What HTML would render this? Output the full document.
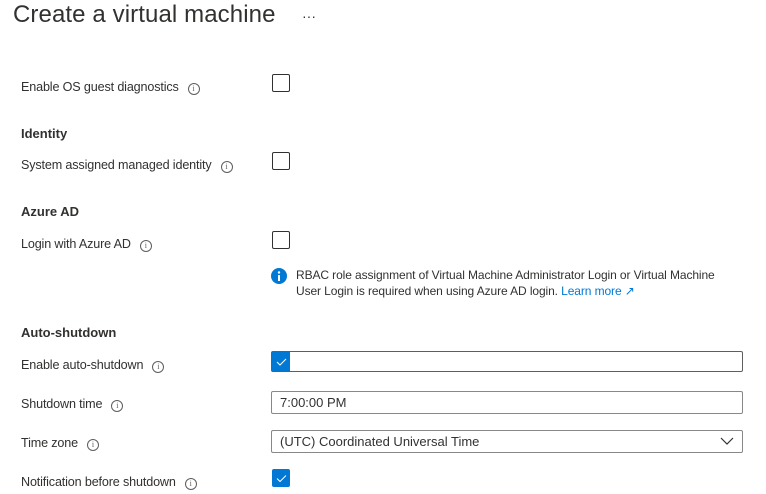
<!DOCTYPE html>
<html><head><style>
body{margin:0;width:766px;height:494px;background:#fff;font-family:"Segoe UI","Liberation Sans",sans-serif;color:#323130;position:relative;overflow:hidden}
.a{position:absolute}
.t{left:13px;top:1px;font-size:24px;color:#323130;white-space:nowrap;letter-spacing:0.1px}
.lbl{left:21px;font-size:12.6px;line-height:16px;white-space:nowrap;transform:translateY(-7px);letter-spacing:-0.15px}
.h{left:21px;font-size:13px;font-weight:bold;transform:translateY(-7px)}
.i{display:inline-block;width:10px;height:10px;border:1px solid #605e5c;border-radius:50%;font-size:8px;line-height:10px;text-align:center;margin-left:9px;vertical-align:0px;color:#605e5c;font-family:"Liberation Serif",serif;letter-spacing:0}
.cb{width:16px;height:16px;border:1px solid #323130;border-radius:2px;left:272px}
.box{left:271px;border:1px solid #8a8886;border-radius:2px;font-size:13px;line-height:21px;padding-left:8px;box-sizing:border-box;width:472px}
</style></head><body>
<div class="a t">Create a virtual machine</div>
<div class="a" style="left:302px;top:8px;font-size:14px">···</div>

<div class="a lbl" style="top:86px">Enable OS guest diagnostics<span class="i">i</span></div>
<div class="a cb" style="top:74px"></div>

<div class="a h" style="top:133px">Identity</div>
<div class="a lbl" style="top:164px">System assigned managed identity<span class="i">i</span></div>
<div class="a cb" style="top:152px"></div>

<div class="a h" style="top:211px">Azure AD</div>
<div class="a lbl" style="top:243px">Login with Azure AD<span class="i">i</span></div>
<div class="a cb" style="top:231px"></div>

<svg class="a" style="left:271px;top:268px" width="16" height="16"><circle cx="8" cy="8" r="8" fill="#0078d4"/><rect x="7" y="7" width="2" height="6" fill="#fff"/><circle cx="8" cy="4.5" r="1.2" fill="#fff"/></svg>
<div class="a" style="left:296px;top:267px;font-size:12px;line-height:16px;width:430px;letter-spacing:-0.1px">RBAC role assignment of Virtual Machine Administrator Login or Virtual Machine User Login is required when using Azure AD login. <span style="color:#0078d4">Learn more ↗</span></div>

<div class="a h" style="top:332px">Auto-shutdown</div>
<div class="a lbl" style="top:364px">Enable auto-shutdown<span class="i">i</span></div>
<div class="a box" style="top:351px;height:21px;border-color:#605e5c"></div>
<svg class="a" style="left:272px;top:352px" width="18" height="19"><rect width="18" height="19" fill="#0078d4"/><path d="M5 10l3 3 6-6" stroke="#fff" fill="none" stroke-width="1"/></svg>

<div class="a lbl" style="top:403px">Shutdown time<span class="i">i</span></div>
<div class="a box" style="top:391px;height:23px">7:00:00 PM</div>

<div class="a lbl" style="top:442px">Time zone<span class="i">i</span></div>
<div class="a box" style="top:430px;height:23px">(UTC) Coordinated Universal Time</div>
<svg class="a" style="left:720px;top:436px" width="14" height="10"><path d="M1 2l6 6 6-6" stroke="#323130" fill="none" stroke-width="1.2"/></svg>

<div class="a lbl" style="top:481px">Notification before shutdown<span class="i">i</span></div>
<svg class="a" style="left:272px;top:469px" width="18" height="18"><rect width="18" height="18" rx="2" fill="#0078d4"/><path d="M5 9.5l3 3 6-6" stroke="#fff" fill="none" stroke-width="1"/></svg>
</body></html>
